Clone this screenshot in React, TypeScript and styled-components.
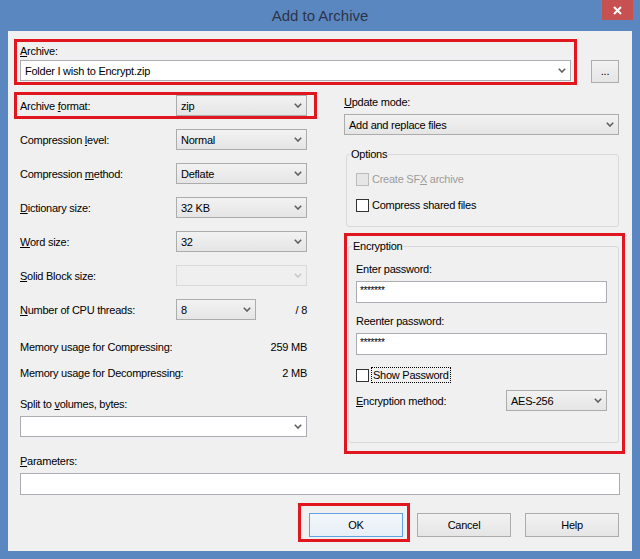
import React from 'react';
import styled, { createGlobalStyle } from 'styled-components';

const GlobalStyle = createGlobalStyle`
  html, body {
    margin: 0;
    padding: 0;
    background: #5b87c1;
  }
  body {
    font-family: "Liberation Sans", Arial, sans-serif;
    font-size: 11px;
    letter-spacing: -0.25px;
    color: #000;
  }
`;

const RED = '#e1171f';

const Window = styled.div`
  width: 640px;
  height: 559px;
  box-sizing: border-box;
  background: #5b87c1;
  padding: 0 8px 8px;
  display: flex;
  flex-direction: column;
`;

const TitleBar = styled.div`
  height: 31px;
  margin: 0 -8px;
  display: grid;
  grid-template-columns: 1fr auto 1fr;
`;

const Title = styled.div`
  grid-column: 2;
  font-size: 15px;
  letter-spacing: 0;
  line-height: 31px;
  color: #2b3549;
`;

const CloseButton = styled.div`
  grid-column: 3;
  justify-self: end;
  align-self: start;
  width: 31px;
  height: 20px;
  margin-right: 7px;
  background: #c75050;
  display: flex;
  align-items: center;
  justify-content: center;
`;

const Client = styled.div`
  height: 520px;
  background: #f0f0f0;
  display: flex;
  flex-direction: column;
`;

const TopRow = styled.div`
  display: flex;
  align-items: flex-start;
  margin: 8px 0 0 6px;
`;

const ArchiveBox = styled.div`
  width: 563px;
  height: 46px;
  box-sizing: border-box;
  border: 3px solid ${RED};
  padding: 0 3px;
`;

const Label = styled.div<{ $h?: number; $mt?: number }>`
  height: ${(p) => p.$h ?? 16}px;
  line-height: ${(p) => p.$h ?? 16}px;
  margin-top: ${(p) => p.$mt ?? 0}px;
  white-space: nowrap;
`;

const Combo = styled.div<{ $w?: number; $editable?: boolean; $disabled?: boolean; $mt?: number }>`
  width: ${(p) => (p.$w ? `${p.$w}px` : 'auto')};
  height: 21px;
  box-sizing: border-box;
  margin-top: ${(p) => p.$mt ?? 0}px;
  border: 1px solid ${(p) => (p.$disabled ? '#d9d9d9' : p.$editable ? '#abadb3' : '#acacac')};
  background: ${(p) =>
    p.$editable ? '#fff' : p.$disabled ? '#efefef' : 'linear-gradient(#f2f2f2, #e5e5e5)'};
  display: flex;
  align-items: center;
  justify-content: space-between;
  padding: 0 4px 0 4px;
  white-space: nowrap;
`;

const BrowseButton = styled.div`
  width: 28px;
  height: 23px;
  box-sizing: border-box;
  margin: 21px 0 0 14px;
  border: 1px solid #acacac;
  background: linear-gradient(#f2f2f2, #e5e5e5);
  text-align: center;
  line-height: 21px;
`;

const Columns = styled.div`
  display: flex;
  align-items: flex-start;
  margin-top: 7px;
`;

const LeftCol = styled.div`
  width: 287px;
  margin-left: 12px;
  display: flex;
  flex-direction: column;
`;

const FormatBox = styled.div`
  margin: 0 -10px 0 -6px;
  border: 3px solid ${RED};
  padding: 0 7px 0 3px;
  display: grid;
  grid-template-columns: 156px 131px;
  align-items: center;
`;

const FieldRow = styled.div<{ $cols?: string; $mt?: number }>`
  display: grid;
  grid-template-columns: ${(p) => p.$cols ?? '156px 131px'};
  align-items: center;
  height: 21px;
  margin-top: ${(p) => p.$mt ?? 13}px;
`;

const Suffix = styled.div`
  justify-self: end;
`;

const InfoRow = styled.div<{ $mt: number }>`
  display: flex;
  justify-content: space-between;
  height: 16px;
  line-height: 16px;
  margin-top: ${(p) => p.$mt}px;
`;

const RightCol = styled.div`
  width: 275px;
  margin-left: 37px;
  padding-top: 2px;
  display: flex;
  flex-direction: column;
`;

const GroupBox = styled.fieldset<{ $mt?: number; $ml?: number }>`
  margin: ${(p) => p.$mt ?? 0}px 0 0 ${(p) => p.$ml ?? 0}px;
  padding: 0;
  border: 1px solid #d9d9d9;
  border-radius: 3px;
  min-width: 0;
`;

const GroupTitle = styled.legend`
  margin-left: 3px;
  padding: 0 1px;
  height: 16px;
  line-height: 16px;
`;

const OptionsBody = styled.div`
  display: flex;
  flex-direction: column;
  gap: 10px;
  padding: 9px 0 13px 9px;
`;

const CheckRow = styled.div<{ $disabled?: boolean; $mt?: number }>`
  display: flex;
  align-items: center;
  height: 16px;
  margin-top: ${(p) => p.$mt ?? 0}px;
  color: ${(p) => (p.$disabled ? '#9c9c9c' : '#000')};
  white-space: nowrap;
`;

const CheckBox = styled.span<{ $disabled?: boolean }>`
  width: 13px;
  height: 13px;
  box-sizing: border-box;
  border: 1px solid ${(p) => (p.$disabled ? '#bcbcbc' : '#333')};
  background: ${(p) => (p.$disabled ? '#e6e6e6' : '#fff')};
  margin-right: 3px;
`;

const FocusText = styled.span`
  border: 1px dotted #000;
  padding: 0 1px;
  line-height: 14px;
  margin-left: -1px;
`;

const EncryptionBox = styled.div`
  margin: 6px -6px 0 0;
  border: 3px solid ${RED};
  padding: 2px 3px 8px 1px;
`;

const EncBody = styled.div`
  display: flex;
  flex-direction: column;
  padding: 7px 11px 31px 7px;
`;

const TextBox = styled.div<{ $mt?: number; $w?: number; $ml?: number }>`
  height: 22px;
  box-sizing: border-box;
  width: ${(p) => (p.$w ? `${p.$w}px` : 'auto')};
  margin: ${(p) => p.$mt ?? 0}px 0 0 ${(p) => p.$ml ?? 0}px;
  border: 1px solid #abadb3;
  background: #fff;
  padding: 0 3px;
  line-height: 16px;
`;

const Masked = styled.span`
  font-size: 10px;
  letter-spacing: -0.4px;
`;

const MethodRow = styled.div`
  display: grid;
  grid-template-columns: 1fr 101px;
  align-items: center;
  height: 21px;
  margin-top: 7px;
`;

const ParamLabel = styled.div`
  height: 14px;
  line-height: 14px;
  margin-left: 12px;
`;

const ButtonRow = styled.div`
  display: flex;
  justify-content: flex-end;
  align-items: flex-start;
  margin-top: 8px;
  padding-right: 13px;
`;

const OkBox = styled.div`
  border: 3px solid ${RED};
  padding: 7px 4px 2px 8px;
`;

const Button = styled.div<{ $focused?: boolean; $ml?: number; $mt?: number }>`
  width: 94px;
  height: 24px;
  box-sizing: border-box;
  margin: ${(p) => p.$mt ?? 0}px 0 0 ${(p) => p.$ml ?? 0}px;
  border: 1px solid ${(p) => (p.$focused ? '#5fa2e3' : '#acacac')};
  background: ${(p) => (p.$focused ? 'linear-gradient(#f3f7fb, #e7eef6)' : 'linear-gradient(#f2f2f2, #e5e5e5)')};
  text-align: center;
  line-height: 22px;
`;

const Chevron = ({ disabled }: { disabled?: boolean }) => (
  <svg width="8" height="5" viewBox="0 0 8 5">
    <path
      d="M0.8 0.8 L4 4 L7.2 0.8"
      fill="none"
      stroke={disabled ? '#c8c8c8' : '#5f5f5f'}
      strokeWidth="1.6"
    />
  </svg>
);

const Select = ({
  value,
  w,
  editable,
  disabled,
  mt,
}: {
  value?: string;
  w?: number;
  editable?: boolean;
  disabled?: boolean;
  mt?: number;
}) => (
  <Combo $w={w} $editable={editable} $disabled={disabled} $mt={mt}>
    <span>{value}</span>
    <Chevron disabled={disabled} />
  </Combo>
);

export default function App() {
  return (
    <>
      <GlobalStyle />
      <Window>
        <TitleBar>
          <Title>Add to Archive</Title>
          <CloseButton>
            <svg width="9" height="9" viewBox="0 0 9 9">
              <path d="M1 1 L8 8 M8 1 L1 8" stroke="#fff" strokeWidth="2" />
            </svg>
          </CloseButton>
        </TitleBar>
        <Client>
          <TopRow>
            <ArchiveBox>
              <Label $h={18}>
                <u>A</u>rchive:
              </Label>
              <Select value="Folder I wish to Encrypt.zip" editable />
            </ArchiveBox>
            <BrowseButton>...</BrowseButton>
          </TopRow>

          <Columns>
            <LeftCol>
              <FormatBox>
                <Label>
                  Archive <u>f</u>ormat:
                </Label>
                <Select value="zip" />
              </FormatBox>
              <FieldRow $mt={10}>
                <Label>
                  Compression <u>l</u>evel:
                </Label>
                <Select value="Normal" />
              </FieldRow>
              <FieldRow>
                <Label>
                  Compression <u>m</u>ethod:
                </Label>
                <Select value="Deflate" />
              </FieldRow>
              <FieldRow>
                <Label>
                  <u>D</u>ictionary size:
                </Label>
                <Select value="32 KB" />
              </FieldRow>
              <FieldRow>
                <Label>
                  <u>W</u>ord size:
                </Label>
                <Select value="32" />
              </FieldRow>
              <FieldRow>
                <Label>
                  <u>S</u>olid Block size:
                </Label>
                <Select disabled />
              </FieldRow>
              <FieldRow $cols="156px 80px 1fr">
                <Label>
                  <u>N</u>umber of CPU threads:
                </Label>
                <Select value="8" />
                <Suffix>/ 8</Suffix>
              </FieldRow>
              <InfoRow $mt={19}>
                <span>Memory usage for Compressing:</span>
                <span>259 MB</span>
              </InfoRow>
              <InfoRow $mt={10}>
                <span>Memory usage for Decompressing:</span>
                <span>2 MB</span>
              </InfoRow>
              <InfoRow $mt={15}>
                <span>
                  Split to <u>v</u>olumes, bytes:
                </span>
              </InfoRow>
              <Select editable mt={4} />
            </LeftCol>

            <RightCol>
              <Label>
                <u>U</u>pdate mode:
              </Label>
              <Select value="Add and replace files" mt={4} />
              <GroupBox $mt={11} $ml={2}>
                <GroupTitle>Options</GroupTitle>
                <OptionsBody>
                  <CheckRow $disabled>
                    <CheckBox $disabled />
                    <span>
                      Create SF<u>X</u> archive
                    </span>
                  </CheckRow>
                  <CheckRow>
                    <CheckBox />
                    <span>Compress shared files</span>
                  </CheckRow>
                </OptionsBody>
              </GroupBox>
              <EncryptionBox>
                <GroupBox>
                  <GroupTitle>Encryption</GroupTitle>
                  <EncBody>
                    <Label>Enter password:</Label>
                    <TextBox $mt={4}>
                      <Masked>*******</Masked>
                    </TextBox>
                    <Label $mt={10}>Reenter password:</Label>
                    <TextBox $mt={4}>
                      <Masked>*******</Masked>
                    </TextBox>
                    <CheckRow $mt={12}>
                      <CheckBox />
                      <FocusText>Show Password</FocusText>
                    </CheckRow>
                    <MethodRow>
                      <Label>
                        <u>E</u>ncryption method:
                      </Label>
                      <Select value="AES-256" />
                    </MethodRow>
                  </EncBody>
                </GroupBox>
              </EncryptionBox>
            </RightCol>
          </Columns>

          <ParamLabel>
            <u>P</u>arameters:
          </ParamLabel>
          <TextBox $mt={5} $ml={12} $w={600} />

          <ButtonRow>
            <OkBox>
              <Button $focused>OK</Button>
            </OkBox>
            <Button $ml={7} $mt={10}>
              Cancel
            </Button>
            <Button $ml={14} $mt={10}>
              Help
            </Button>
          </ButtonRow>
        </Client>
      </Window>
    </>
  );
}
